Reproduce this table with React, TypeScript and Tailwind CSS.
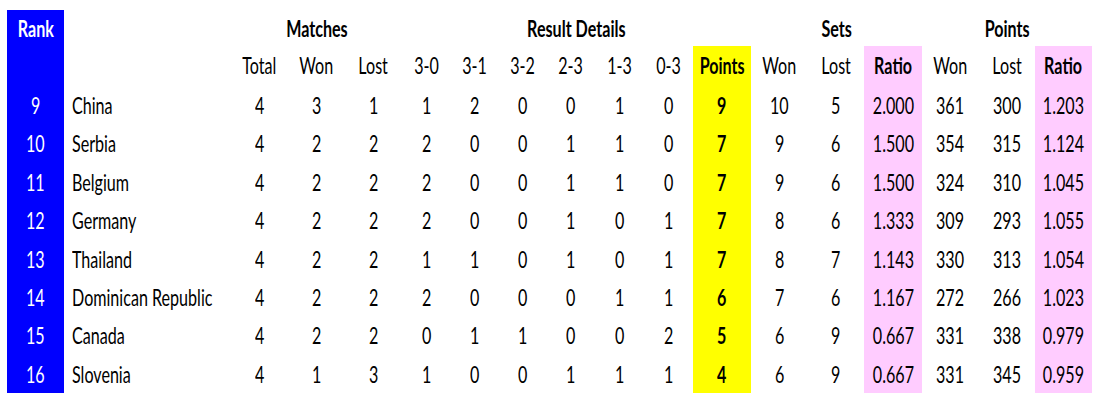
import React from 'react'

type Row = {
  rank: number
  team: string
  total: number
  won: number
  lost: number
  details: number[]
  points: number
  setsWon: number
  setsLost: number
  setsRatio: string
  ptsWon: number
  ptsLost: number
  ptsRatio: string
}

const rows: Row[] = [
  { rank: 9, team: 'China', total: 4, won: 3, lost: 1, details: [1, 2, 0, 0, 1, 0], points: 9, setsWon: 10, setsLost: 5, setsRatio: '2.000', ptsWon: 361, ptsLost: 300, ptsRatio: '1.203' },
  { rank: 10, team: 'Serbia', total: 4, won: 2, lost: 2, details: [2, 0, 0, 1, 1, 0], points: 7, setsWon: 9, setsLost: 6, setsRatio: '1.500', ptsWon: 354, ptsLost: 315, ptsRatio: '1.124' },
  { rank: 11, team: 'Belgium', total: 4, won: 2, lost: 2, details: [2, 0, 0, 1, 1, 0], points: 7, setsWon: 9, setsLost: 6, setsRatio: '1.500', ptsWon: 324, ptsLost: 310, ptsRatio: '1.045' },
  { rank: 12, team: 'Germany', total: 4, won: 2, lost: 2, details: [2, 0, 0, 1, 0, 1], points: 7, setsWon: 8, setsLost: 6, setsRatio: '1.333', ptsWon: 309, ptsLost: 293, ptsRatio: '1.055' },
  { rank: 13, team: 'Thailand', total: 4, won: 2, lost: 2, details: [1, 1, 0, 1, 0, 1], points: 7, setsWon: 8, setsLost: 7, setsRatio: '1.143', ptsWon: 330, ptsLost: 313, ptsRatio: '1.054' },
  { rank: 14, team: 'Dominican Republic', total: 4, won: 2, lost: 2, details: [2, 0, 0, 0, 1, 1], points: 6, setsWon: 7, setsLost: 6, setsRatio: '1.167', ptsWon: 272, ptsLost: 266, ptsRatio: '1.023' },
  { rank: 15, team: 'Canada', total: 4, won: 2, lost: 2, details: [0, 1, 1, 0, 0, 2], points: 5, setsWon: 6, setsLost: 9, setsRatio: '0.667', ptsWon: 331, ptsLost: 338, ptsRatio: '0.979' },
  { rank: 16, team: 'Slovenia', total: 4, won: 1, lost: 3, details: [1, 0, 0, 1, 1, 1], points: 4, setsWon: 6, setsLost: 9, setsRatio: '0.667', ptsWon: 331, ptsLost: 345, ptsRatio: '0.959' },
]

function Cell({ children, className = '' }: { children?: React.ReactNode; className?: string }) {
  return (
    <div className={`flex items-center justify-center ${className}`}>
      <span className="inline-block whitespace-nowrap scale-x-[0.7]">{children}</span>
    </div>
  )
}

export default function App() {
  return (
    <div className="w-[1100px] h-[400px] bg-white pl-[7px] pt-[10px] font-['Lato',sans-serif] text-[23px] text-black">
      <div className="grid grid-cols-[57px_167px_57px_57px_57px_49px_48px_48px_48px_50px_48px_58px_57px_56px_58px_57px_56px_57px]">
        {/* Header row 1 */}
        <Cell className="h-[36px] bg-[#0000ff] text-white font-bold">Rank</Cell>
        <div />
        <Cell className="col-span-3 font-bold">Matches</Cell>
        <Cell className="col-span-7 font-bold">Result Details</Cell>
        <Cell className="col-span-3 font-bold">Sets</Cell>
        <Cell className="col-span-3 font-bold">Points</Cell>

        {/* Header row 2 */}
        <div className="h-[40px] bg-[#0000ff]" />
        <div />
        <Cell className="pb-[2px]">Total</Cell>
        <Cell className="pb-[2px]">Won</Cell>
        <Cell className="pb-[2px]">Lost</Cell>
        <Cell className="pb-[2px]">3-0</Cell>
        <Cell className="pb-[2px]">3-1</Cell>
        <Cell className="pb-[2px]">3-2</Cell>
        <Cell className="pb-[2px]">2-3</Cell>
        <Cell className="pb-[2px]">1-3</Cell>
        <Cell className="pb-[2px]">0-3</Cell>
        <Cell className="pb-[2px] bg-[#ffff00] font-bold">Points</Cell>
        <Cell className="pb-[2px]">Won</Cell>
        <Cell className="pb-[2px]">Lost</Cell>
        <Cell className="pb-[2px] bg-[#ffccff] font-bold">Ratio</Cell>
        <Cell className="pb-[2px]">Won</Cell>
        <Cell className="pb-[2px]">Lost</Cell>
        <Cell className="pb-[2px] bg-[#ffccff] font-bold">Ratio</Cell>

        {/* Data rows */}
        {rows.map((r) => (
          <React.Fragment key={r.rank}>
            <Cell className="h-[38.4px] bg-[#0000ff] text-white">{r.rank}</Cell>
            <div className="flex items-center pl-[8px]">
              <span className="inline-block whitespace-nowrap origin-left scale-x-[0.7]">{r.team}</span>
            </div>
            <Cell>{r.total}</Cell>
            <Cell>{r.won}</Cell>
            <Cell>{r.lost}</Cell>
            {r.details.map((d, i) => (
              <Cell key={i}>{d}</Cell>
            ))}
            <Cell className="bg-[#ffff00] font-bold">{r.points}</Cell>
            <Cell>{r.setsWon}</Cell>
            <Cell>{r.setsLost}</Cell>
            <Cell className="bg-[#ffccff]">{r.setsRatio}</Cell>
            <Cell>{r.ptsWon}</Cell>
            <Cell>{r.ptsLost}</Cell>
            <Cell className="bg-[#ffccff]">{r.ptsRatio}</Cell>
          </React.Fragment>
        ))}
      </div>
    </div>
  )
}
